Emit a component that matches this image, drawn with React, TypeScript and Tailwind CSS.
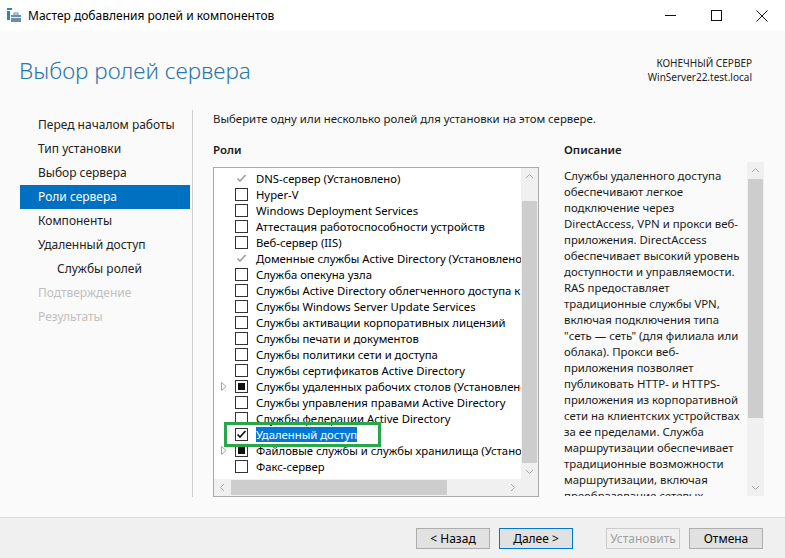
import React from 'react';

type RoleState = 'off' | 'on' | 'installed' | 'partial';

interface Role {
  label: string;
  state: RoleState;
  expand?: boolean;
  selected?: boolean;
}

const ROLES: Role[] = [
  { label: 'DNS-сервер (Установлено)', state: 'installed' },
  { label: 'Hyper-V', state: 'off' },
  { label: 'Windows Deployment Services', state: 'off' },
  { label: 'Аттестация работоспособности устройств', state: 'off' },
  { label: 'Веб-сервер (IIS)', state: 'off' },
  { label: 'Доменные службы Active Directory (Установлено)', state: 'installed' },
  { label: 'Служба опекуна узла', state: 'off' },
  { label: 'Службы Active Directory облегченного доступа к каталогам', state: 'off' },
  { label: 'Службы Windows Server Update Services', state: 'off' },
  { label: 'Службы активации корпоративных лицензий', state: 'off' },
  { label: 'Службы печати и документов', state: 'off' },
  { label: 'Службы политики сети и доступа', state: 'off' },
  { label: 'Службы сертификатов Active Directory', state: 'off' },
  { label: 'Службы удаленных рабочих столов (Установлено)', state: 'partial', expand: true },
  { label: 'Службы управления правами Active Directory', state: 'off' },
  { label: 'Службы федерации Active Directory', state: 'off' },
  { label: 'Удаленный доступ', state: 'on', selected: true },
  { label: 'Файловые службы и службы хранилища (Установлено)', state: 'partial', expand: true },
  { label: 'Факс-сервер', state: 'off' },
];

const NAV = [
  { label: 'Перед началом работы' },
  { label: 'Тип установки' },
  { label: 'Выбор сервера' },
  { label: 'Роли сервера', active: true },
  { label: 'Компоненты' },
  { label: 'Удаленный доступ' },
  { label: 'Службы ролей', sub: true },
  { label: 'Подтверждение', disabled: true },
  { label: 'Результаты', disabled: true },
];

const DESCRIPTION = [
  'Службы удаленного доступа',
  'обеспечивают легкое',
  'подключение через',
  'DirectAccess, VPN и прокси веб-',
  'приложения. DirectAccess',
  'обеспечивает высокий уровень',
  'доступности и управляемости.',
  'RAS предоставляет',
  'традиционные службы VPN,',
  'включая подключения типа',
  '"сеть — сеть" (для филиала или',
  'облака). Прокси веб-',
  'приложения позволяет',
  'публиковать HTTP- и HTTPS-',
  'приложения из корпоративной',
  'сети на клиентских устройствах',
  'за ее пределами. Служба',
  'маршрутизации обеспечивает',
  'традиционные возможности',
  'маршрутизации, включая',
  'преобразование сетевых',
];

function Chevron({ dir }: { dir: 'up' | 'down' | 'left' | 'right' }) {
  const pts = {
    up: '1,6 4.5,2.5 8,6',
    down: '1,3 4.5,6.5 8,3',
    left: '6,1 2.5,4.5 6,8',
    right: '3,1 6.5,4.5 3,8',
  }[dir];
  return (
    <svg width="9" height="9" viewBox="0 0 9 9">
      <polyline points={pts} fill="none" stroke="#a6a6a6" strokeWidth="1" />
    </svg>
  );
}

function CheckBox({ state }: { state: RoleState }) {
  if (state === 'installed') {
    return (
      <span className="w-[13px] h-[13px] flex items-center justify-center shrink-0">
        <svg width="11" height="11" viewBox="0 0 11 11">
          <polyline points="1.5,5.5 4,8 9.5,2" fill="none" stroke="#a0a0a0" strokeWidth="1.7" />
        </svg>
      </span>
    );
  }
  return (
    <span className="w-[13px] h-[13px] border border-[#333] bg-white flex items-center justify-center shrink-0">
      {state === 'partial' && <span className="w-[7px] h-[7px] bg-[#111]" />}
      {state === 'on' && (
        <svg width="11" height="11" viewBox="0 0 11 11">
          <polyline points="1.5,5.5 4,8 9.5,2" fill="none" stroke="#111" strokeWidth="1.7" />
        </svg>
      )}
    </span>
  );
}

function WinButton({ label, variant }: { label: string; variant?: 'default' | 'disabled' }) {
  const cls =
    variant === 'default'
      ? 'border-[#0078d7] bg-[#e1e1e1] text-black'
      : variant === 'disabled'
      ? 'border-[#cccccc] bg-[#f0f0f0] text-[#a0a0a0]'
      : 'border-[#adadad] bg-[#e1e1e1] text-black';
  return (
    <div className={`w-[74px] h-[21px] border flex items-center justify-center text-[12px] ${cls}`}>
      {label}
    </div>
  );
}

export default function App() {
  return (
    <div className="w-[785px] h-[558px] flex flex-col bg-[#fafafa] overflow-hidden font-['Noto_Sans','Open_Sans',sans-serif] text-[#1a1a1a]">
      {/* Title bar */}
      <div className="h-[31px] bg-white flex items-center shrink-0">
        <svg className="ml-[6px]" width="16" height="16" viewBox="0 0 16 16">
          <rect x="1" y="0" width="5" height="2" fill="#1e88d2" />
          <rect x="1" y="3" width="3" height="9" fill="#1e88d2" />
          <rect x="5" y="7" width="10" height="7" fill="#6f8ea6" />
          <rect x="8" y="5" width="4" height="2" fill="none" stroke="#6f8ea6" strokeWidth="1" />
          <rect x="5" y="9" width="10" height="1" fill="#e8eef3" />
        </svg>
        <span className="ml-[6px] text-[12px] text-black">Мастер добавления ролей и компонентов</span>
        <div className="ml-auto flex h-full">
          <div className="w-[46px] flex items-center justify-center">
            <svg width="11" height="11" viewBox="0 0 11 11">
              <line x1="0" y1="5.5" x2="11" y2="5.5" stroke="#111" strokeWidth="1" />
            </svg>
          </div>
          <div className="w-[46px] flex items-center justify-center">
            <svg width="11" height="11" viewBox="0 0 11 11">
              <rect x="0.5" y="0.5" width="10" height="10" fill="none" stroke="#111" strokeWidth="1" />
            </svg>
          </div>
          <div className="w-[46px] flex items-center justify-center">
            <svg width="12" height="12" viewBox="0 0 12 12">
              <line x1="0.5" y1="0.5" x2="11.5" y2="11.5" stroke="#111" strokeWidth="1" />
              <line x1="11.5" y1="0.5" x2="0.5" y2="11.5" stroke="#111" strokeWidth="1" />
            </svg>
          </div>
        </div>
      </div>

      {/* Header */}
      <div className="h-[79px] shrink-0 flex items-start pl-[19px] pr-[33px]">
        <div className="mt-[25px] text-[22.5px] leading-[30px] font-light text-[#2a77aa]">Выбор ролей сервера</div>
        <div className="ml-auto mt-[25px] text-right text-[10px] leading-[14px] text-[#222]">
          <div>КОНЕЧНЫЙ СЕРВЕР</div>
          <div>WinServer22.test.local</div>
        </div>
      </div>

      {/* Body */}
      <div className="h-[387px] flex shrink-0">
        {/* Nav */}
        <div className="w-[193px] border-r border-[#cfcfcf] pl-[20px] pt-[3px] shrink-0">
          {NAV.map((n) => (
            <div
              key={n.label}
              className={`w-[170px] h-[24px] flex items-center text-[12px] ${n.sub ? 'pl-[37px]' : 'pl-[18px]'} ${
                n.active ? 'bg-[#0070c0] text-white' : n.disabled ? 'text-[#c0c0c0]' : 'text-[#222]'
              }`}
            >
              {n.label}
            </div>
          ))}
        </div>

        {/* Main */}
        <div className="pl-[20px] pt-[1px] flex flex-col">
          <div className="h-[16px] leading-[16px] text-[11.4px] whitespace-nowrap">
            Выберите одну или несколько ролей для установки на этом сервере.
          </div>
          <div className="flex">
            {/* Roles column */}
            <div className="w-[326px] shrink-0">
              <div className="mt-[15px] h-[16px] leading-[16px] text-[11.5px] font-semibold">Роли</div>
              <div className="mt-[9px] w-[326px] h-[330px] border border-[#ababab] bg-white relative flex flex-col">
                <div className="flex flex-1 min-h-0">
                  <div className="flex-1 overflow-hidden pt-[2px]">
                    {ROLES.map((r) => (
                      <div key={r.label} className="h-[16px] flex items-center whitespace-nowrap">
                        <span className="w-[21px] pl-[7px] flex items-center shrink-0">
                          {r.expand && (
                            <svg width="6" height="9" viewBox="0 0 6 9">
                              <polygon points="0.5,0.5 5,4.5 0.5,8.5" fill="none" stroke="#a6a6a6" strokeWidth="1" />
                            </svg>
                          )}
                        </span>
                        <CheckBox state={r.state} />
                        <span
                          className={`ml-[8px] text-[11.3px] leading-[15px] ${
                            r.selected ? 'bg-[#0078d7] text-white' : 'text-black'
                          }`}
                        >
                          {r.label}
                        </span>
                      </div>
                    ))}
                  </div>
                  {/* vertical scrollbar */}
                  <div className="w-[17px] bg-[#f0f0f0] flex flex-col shrink-0">
                    <div className="h-[17px] flex items-center justify-center">
                      <Chevron dir="up" />
                    </div>
                    <div className="h-[16px]" />
                    <div className="mx-[1px] h-[262px] bg-[#cdcdcd]" />
                    <div className="flex-1 flex items-center justify-center">
                      <Chevron dir="down" />
                    </div>
                  </div>
                </div>
                {/* horizontal scrollbar */}
                <div className="h-[17px] flex shrink-0">
                  <div className="flex-1 bg-[#f0f0f0] flex">
                    <div className="w-[17px] flex items-center justify-center">
                      <Chevron dir="left" />
                    </div>
                    <div className="w-[216px] my-[1px] bg-[#cdcdcd]" />
                    <div className="flex-1" />
                    <div className="w-[17px] flex items-center justify-center">
                      <Chevron dir="right" />
                    </div>
                  </div>
                  <div className="w-[17px] bg-[#f0f0f0]" />
                </div>
                {/* highlight frame */}
                <div className="absolute left-[10px] top-[254px] w-[157px] h-[25px] border-[3px] border-[#2aa64a]" />
              </div>
            </div>

            {/* Description column */}
            <div className="ml-[25px] w-[200px] shrink-0">
              <div className="mt-[15px] h-[16px] leading-[16px] text-[11.5px] font-semibold">Описание</div>
              <div className="mt-[4px] h-[334px] flex">
                <div className="flex-1 overflow-hidden pt-[6px]">
                  {DESCRIPTION.map((l, i) => (
                    <div key={i} className="h-[16px] leading-[16px] text-[11.4px] whitespace-nowrap">
                      {l}
                    </div>
                  ))}
                </div>
                <div className="w-[17px] bg-[#f0f0f0] flex flex-col shrink-0">
                  <div className="h-[17px] flex items-center justify-center">
                    <Chevron dir="up" />
                  </div>
                  <div className="mx-[1px] h-[239px] bg-[#cdcdcd]" />
                  <div className="flex-1 flex items-end justify-center pb-[4px]">
                    <Chevron dir="down" />
                  </div>
                </div>
              </div>
            </div>
          </div>
        </div>
      </div>

      <div className="flex-1" />

      {/* Footer */}
      <div className="h-[41px] shrink-0 border-t border-[#dcdcdc] bg-[#f0f0f0] flex items-start pt-[10px] pr-[22px] justify-end">
        <WinButton label="< Назад" />
        <div className="w-[9px]" />
        <WinButton label="Далее >" variant="default" />
        <div className="w-[33px]" />
        <WinButton label="Установить" variant="disabled" />
        <div className="w-[9px]" />
        <WinButton label="Отмена" />
      </div>
    </div>
  );
}
